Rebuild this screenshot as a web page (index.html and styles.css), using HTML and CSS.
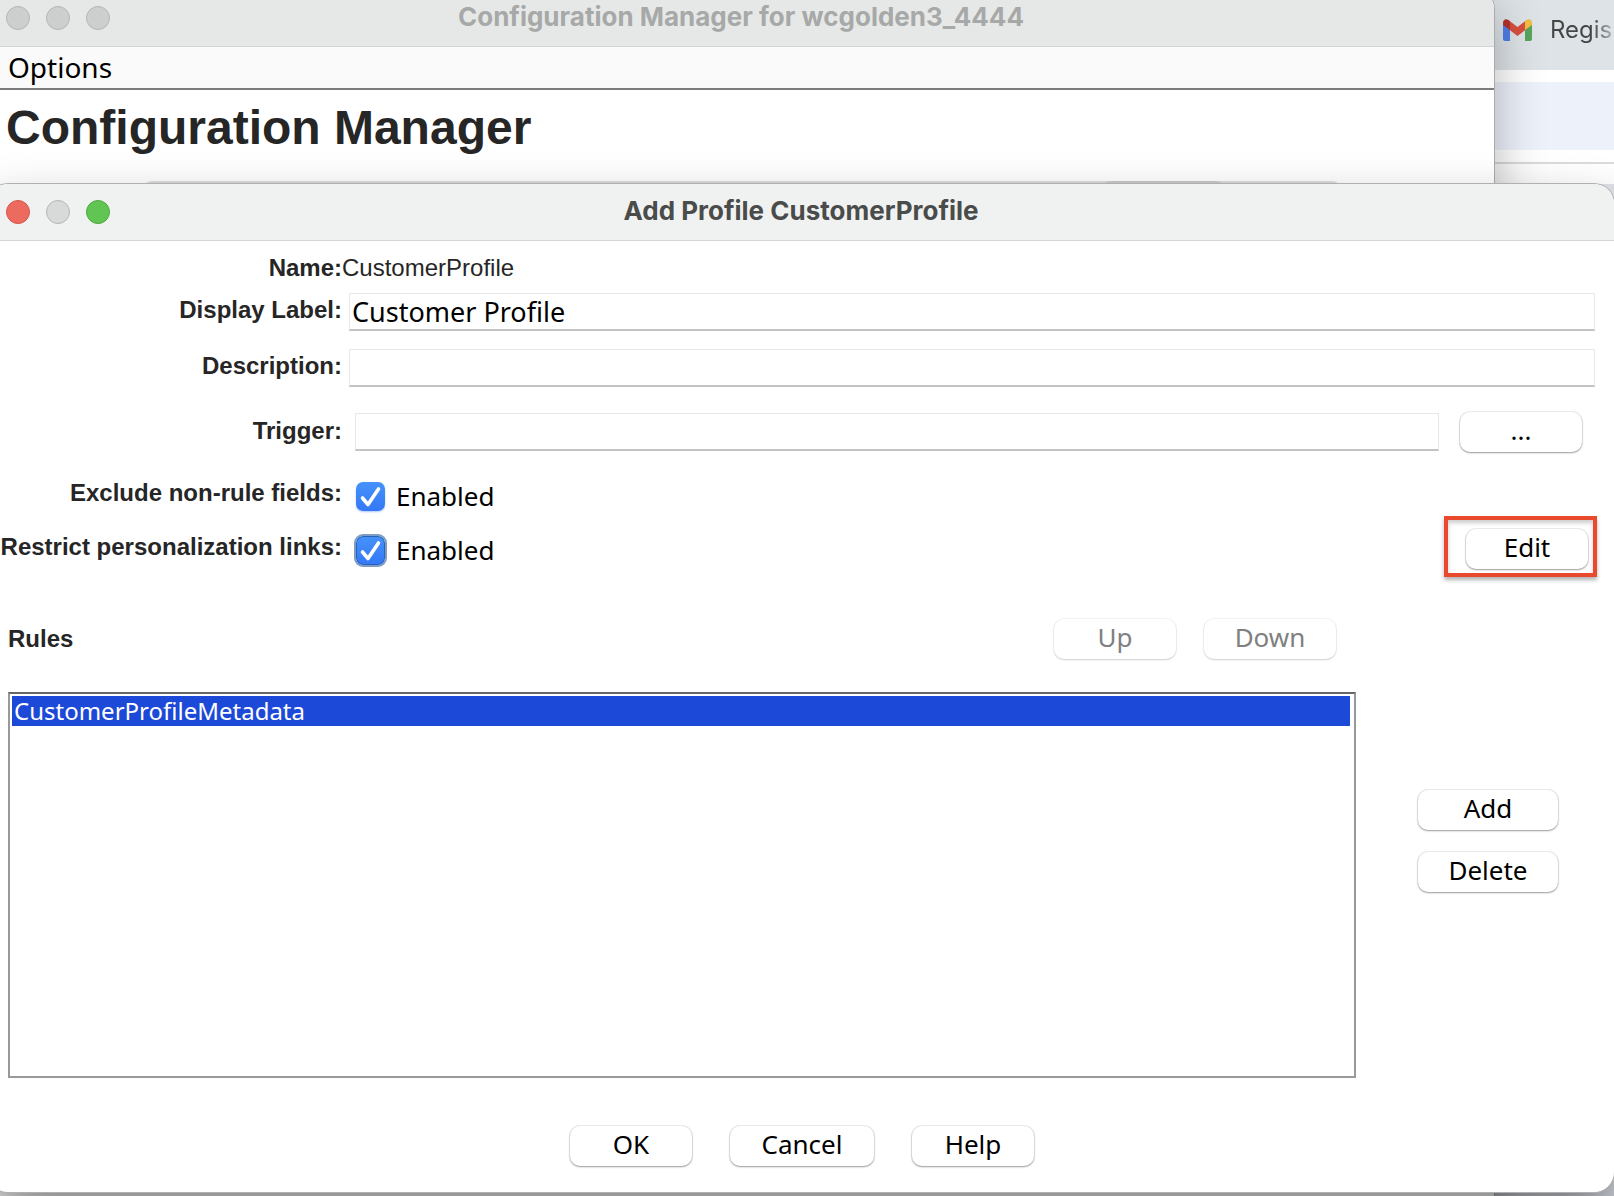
FILE: index.html
```html
<!DOCTYPE html>
<html lang="en">
<head>
<meta charset="utf-8">
<title>Add Profile CustomerProfile</title>
<link rel="stylesheet" href="styles.css">
</head>
<body>
<div class="desktop">
  <div class="browser">
    <div class="browser-tabs">
      <svg class="gmail" viewBox="0 0 29 22" aria-hidden="true">
        <path fill="#4f7fe6" d="M0 5h7v17H2a2 2 0 0 1-2-2z"/>
        <path fill="#58a55c" d="M22 5h7v15a2 2 0 0 1-2 2h-5z"/>
        <path fill="#d8503f" d="M6 1.500l8.500 6.500L23 1.500v9l-8.500 6.500L6 10.500z"/>
        <path fill="#b3322a" d="M0 3.500C0 .5 3-.8 5.400.9L7 2.200V11L0 6z"/>
        <path fill="#f2bd42" d="M29 3.500C29 .5 26-.8 23.600.9L22 2.200V11L29 6z"/>
      </svg>
      <span class="tab-title">Regis</span>
    </div>
    <div class="browser-toolbar"></div>
    <div class="browser-bookmarks"></div>
  </div>

  <section class="window window-back">
    <header class="titlebar">
      <div class="lights"><span class="light"></span><span class="light"></span><span class="light"></span></div>
      <span class="window-title">Configuration Manager for wcgolden3_4444</span>
    </header>
    <nav class="menubar"><button class="menu" type="button">Options</button></nav>
    <div class="manager">
      <h1 class="heading">Configuration Manager</h1>
      <div class="tabs-edge"><div class="tab-edge"></div></div>
    </div>
  </section>

  <section class="window window-dialog">
    <header class="titlebar">
      <div class="lights"><span class="light light-close"></span><span class="light"></span><span class="light light-zoom"></span></div>
      <span class="window-title">Add Profile CustomerProfile</span>
    </header>
    <form class="dialog">
      <div class="row row-name">
        <span class="label">Name:</span>
        <span class="value">CustomerProfile</span>
      </div>
      <div class="row row-display">
        <label class="label" for="display">Display Label:</label>
        <input class="field" id="display" type="text" value="Customer Profile">
      </div>
      <div class="row row-description">
        <label class="label" for="description">Description:</label>
        <input class="field" id="description" type="text">
      </div>
      <div class="row row-trigger">
        <label class="label" for="trigger">Trigger:</label>
        <input class="field" id="trigger" type="text">
        <button class="btn" type="button">...</button>
      </div>
      <div class="row row-check">
        <span class="label" id="exclude-label">Exclude non-rule fields:</span>
        <label class="check"><input class="box" type="checkbox" checked aria-describedby="exclude-label">Enabled</label>
      </div>
      <div class="row row-check">
        <span class="label" id="restrict-label">Restrict personalization links:</span>
        <label class="check"><input class="box box-focus" type="checkbox" checked aria-describedby="restrict-label">Enabled</label>
        <div class="marked"><button class="btn" type="button">Edit</button></div>
      </div>

      <div class="rules-head">
        <h2 class="label">Rules</h2>
        <button class="btn" type="button" disabled>Up</button>
        <button class="btn btn-down" type="button" disabled>Down</button>
      </div>
      <div class="rules">
        <ul class="list"><li class="item">CustomerProfileMetadata</li></ul>
        <div class="actions">
          <button class="btn" type="button">Add</button>
          <button class="btn" type="button">Delete</button>
        </div>
      </div>
      <footer class="footer">
        <button class="btn" type="button">OK</button>
        <button class="btn btn-cancel" type="button">Cancel</button>
        <button class="btn" type="button">Help</button>
      </footer>
    </form>
  </section>
</div>
</body>
</html>
```

FILE: styles.css
```css
* { box-sizing: border-box; }

body {
  margin: 0;
  color: #262626;
  font: 24px/28px "Liberation Sans", Arial, sans-serif;
}

.desktop {
  position: relative;
  height: 100vh;
  min-height: 900px;
  overflow: hidden;
  background: #fff;
}

/* Browser behind the windows */
.browser {
  display: flex;
  flex-direction: column;
  height: 100%;
  background: #dfe2ea;
}

.browser-tabs {
  display: flex;
  align-items: center;
  justify-content: flex-end;
  gap: 18px;
  height: 70px;
  padding-bottom: 10px;
  background: #dee3e7;
}

.gmail { width: 29px; height: 22px; }

.tab-title {
  width: 64px;
  overflow: hidden;
  font: 24px/28px Inter, sans-serif;
  color: transparent;
  background: linear-gradient(90deg, #444746 65%, #b4b8bb);
  background-clip: text;
  -webkit-background-clip: text;
}

.browser-toolbar {
  height: 92px;
  border: solid #fff;
  border-width: 12px 0;
  background: #edf1fa;
}

.browser-bookmarks {
  height: 22px;
  border-top: 2px solid #dcdcdc;
  background: #fff;
}

/* Windows */
.window {
  position: absolute;
  left: -12px;
  display: flex;
  flex-direction: column;
  border-radius: 20px;
  background: #fff;
}

.window-back {
  top: -11px;
  right: 120px;
  bottom: -40px;
  box-shadow: 0 0 0 1px #a9abad, 0 16px 50px rgba(0, 0, 0, .3);
}

.window-dialog {
  top: 184px;
  right: 0;
  bottom: 4px;
  box-shadow: 0 0 0 1px #b0b0b0, 0 30px 56px rgba(0, 0, 0, .48);
}

.titlebar {
  display: grid;
  grid-template-columns: 1fr auto 1fr;
  align-items: center;
  height: 58px;
  flex: none;
  border-bottom: 1px solid #d3d5d4;
  padding: 0 18px;
  border-radius: 20px 20px 0 0;
  background: #e6e8e7;
  color: #a7a9a8;
}

.window-dialog .titlebar {
  height: 57px;
  background: #f0f2f1;
  color: #4a4c4b;
}

.lights { display: flex; gap: 16px; }

.light {
  width: 24px;
  height: 24px;
  border: 1px solid #b5b7b6;
  border-radius: 50%;
  background: #cdcfce;
}

.window-dialog .light { background: #d8dad9; }
.window-dialog .light-close { border-color: #d3574c; background: #ec6a5e; }
.window-dialog .light-zoom { border-color: #50a73f; background: #61c554; }

.window-title {
  padding-bottom: 2px;
  font: 700 26px/32px Inter, sans-serif;
}

.menubar {
  height: 43px;
  flex: none;
  padding-left: 20px;
  border-bottom: 2px solid #7b7b7b;
  background: #fafafa;
}

.menu {
  padding: 0;
  border: 0;
  background: none;
  color: #000;
  font: 28px/40px "Noto Sans", sans-serif;
}

.manager { padding-top: 10px; }

.heading {
  margin: 0;
  padding-left: 18px;
  font-size: 48px;
  line-height: 56px;
}

.tabs-edge {
  height: 20px;
  margin: 25px 152px 0 154px;
  padding-right: 116px;
  border-radius: 10px;
  background: #dedede;
}

.tab-edge {
  width: 126px;
  height: 20px;
  margin-left: auto;
  border-radius: 10px;
  background: #cacaca;
}

/* Dialog form */
.dialog {
  display: flex;
  flex: 1;
  flex-direction: column;
  padding: 13px 0 26px 12px;
}

.row {
  display: flex;
  align-items: center;
  flex: none;
}

.label {
  margin: 0;
  padding-bottom: 4px;
  font-size: 24px;
  font-weight: 700;
  line-height: 28px;
}

.row .label { width: 342px; text-align: right; white-space: nowrap; }
.row-name { height: 28px; margin-bottom: 11px; }
.row-name .label { padding: 0; }

.row-display,
.row-description { padding: 0 19px 0 0; gap: 7px; }
.row-display { margin-bottom: 18px; }
.row-description { margin-bottom: 25px; }

.row-trigger {
  gap: 13px;
  padding-right: 32px;
  margin-bottom: 23px;
}
.row-trigger .label { padding-bottom: 2px; }
.row-trigger .btn { margin-left: 8px; }

.row-check {
  height: 40px;
  gap: 14px;
  padding-right: 26px;
}
.row-check + .row-check { margin-top: 14px; }

.field {
  flex: 1;
  min-width: 0;
  height: 38px;
  padding: 0 2px;
  border: 1px solid #e7e7e7;
  border-bottom: 2px solid #c3c3c3;
  background: #fff;
  color: #000;
  font: 27px/34px "Noto Sans", sans-serif;
  outline: 0;
}

.check {
  display: flex;
  align-items: center;
  gap: 11px;
  padding-top: 2px;
  color: #000;
  font: 26px/32px "Noto Sans", sans-serif;
}

.box {
  width: 29px;
  height: 29px;
  margin: 0;
  border-radius: 7px;
  appearance: none;
  background:
    url("data:image/svg+xml,%3Csvg xmlns='http://www.w3.org/2000/svg' viewBox='0 0 29 29'%3E%3Cpath d='M6.500 16l5.500 6.500L22.500 7' fill='none' stroke='white' stroke-width='3.600' stroke-linecap='round' stroke-linejoin='round'/%3E%3C/svg%3E"),
    linear-gradient(#4592fb, #3478f6);
  box-shadow: 0 1px 2px rgba(52, 120, 246, .4);
}

.box-focus { box-shadow: inset 0 0 0 1px #2862b4, 0 0 0 2px #7f9cc4; }

.btn {
  width: 122px;
  height: 40px;
  flex: none;
  padding: 0 0 4px;
  border: 0;
  border-radius: 10px;
  background: #fff;
  box-shadow: 0 0 0 1px rgba(0, 0, 0, .07), 0 1px 2px rgba(0, 0, 0, .35);
  color: #000;
  font: 26px/32px "Noto Sans", sans-serif;
}

.btn:disabled {
  color: #808080;
  box-shadow: 0 0 0 1px rgba(0, 0, 0, .04), 0 1px 2px rgba(0, 0, 0, .16);
}

.btn-down { width: 132px; }
.btn-cancel { width: 144px; }

.marked {
  position: relative;
  display: flex;
  margin-left: auto;
}

/* Red call-out drawn over the button */
.marked::after {
  content: "";
  position: absolute;
  inset: -13px -9px -8px -22px;
  border: 4px solid #e9492c;
  box-shadow: 0 3px 4px rgba(0, 0, 0, .3), inset 0 3px 4px rgba(0, 0, 0, .2);
  pointer-events: none;
}

.rules-head {
  display: flex;
  align-items: center;
  gap: 28px;
  margin-top: 50px;
  padding: 0 278px 0 8px;
}
.rules-head .label { margin-right: auto; padding: 0; }

.rules {
  display: flex;
  flex: 1;
  margin: 33px 56px 48px 8px;
  gap: 62px;
}

.list {
  flex: 1;
  margin: 0;
  padding: 2px 4px 2px 2px;
  border: 2px solid #999;
  border-top-color: #666;
  list-style: none;
}

.item {
  padding-left: 2px;
  background: #1d49d8;
  color: #fff;
  font: 24px/30px "Noto Sans", sans-serif;
}

.actions {
  display: flex;
  flex-direction: column;
  gap: 22px;
  width: 140px;
  padding-top: 98px;
}
.actions .btn { width: 100%; }

.footer {
  display: flex;
  justify-content: center;
  gap: 38px;
  padding-right: 10px;
}
```
